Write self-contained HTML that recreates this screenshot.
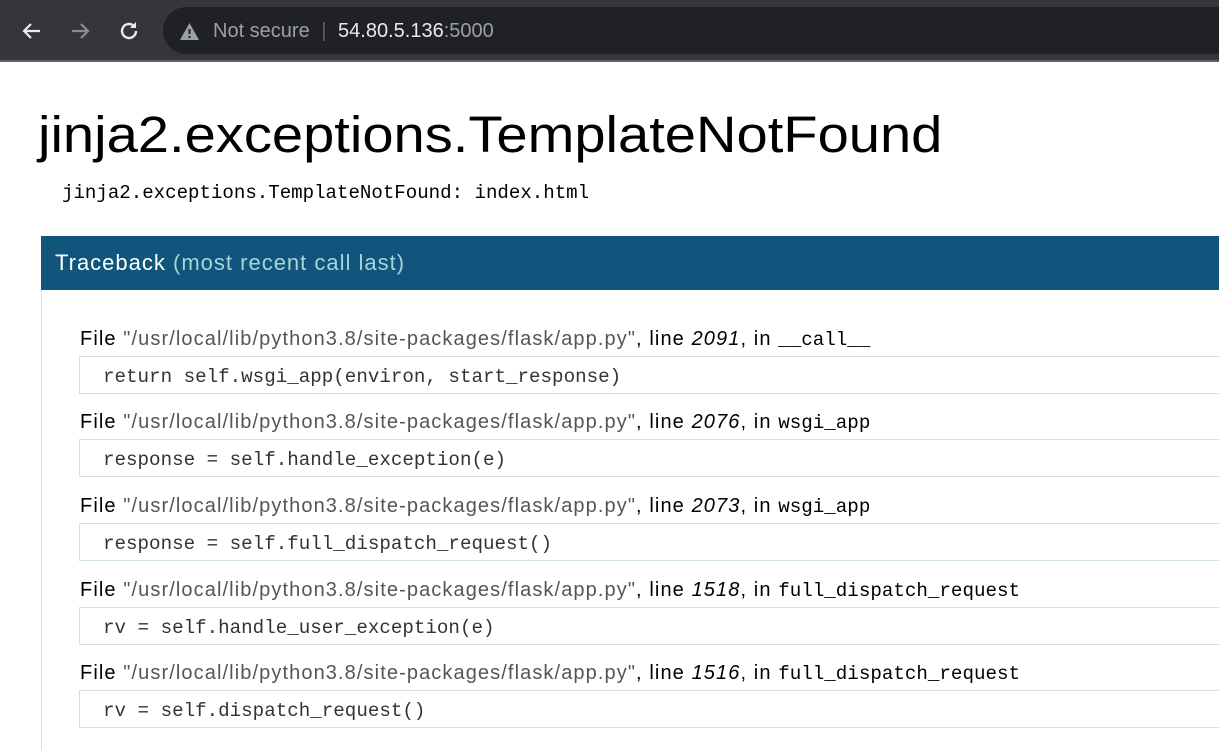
<!DOCTYPE html>
<html><head><meta charset="utf-8"><style>
*{margin:0;padding:0;box-sizing:border-box}
body{width:1219px;height:745px;overflow:hidden;background:#fff;font-family:"Liberation Sans",sans-serif;position:relative}
.bar{position:absolute;left:0;top:0;width:1219px;height:62px;background:#35363a;border-bottom:2px solid #5f6368}
.pill{position:absolute;left:163px;top:7px;width:1080px;height:47px;border-radius:24px;background:#202124}
.url{position:absolute;left:213px;top:20px;font-size:20px;color:#9aa0a6;white-space:nowrap}
.url b{font-weight:normal;color:#e8eaed}
h1{position:absolute;left:38px;top:105px;font-weight:normal;font-size:51px;color:#000;white-space:nowrap;transform:scaleX(1.1);transform-origin:0 0}
.msg{position:absolute;left:62px;top:182px;font-family:"Liberation Mono",monospace;font-size:19.1px;white-space:nowrap}
.tb{position:absolute;left:41px;top:236px;width:1200px;height:54px;background:#11557c;color:#fff;font-size:22px;padding:14px 0 0 14px;letter-spacing:1px;white-space:nowrap}
.tb span{color:#a7d4d9}
.side{position:absolute;left:41px;top:290px;width:1px;height:460px;background:#ddd}
.f{position:absolute;left:80px;font-size:20px;color:#000;white-space:nowrap;letter-spacing:1.1px}
.f .p{color:#555}
.f i{font-style:italic}
.f code{font-family:"Liberation Mono",monospace;font-size:19.2px;letter-spacing:0}
.c{position:absolute;left:79px;width:1160px;height:38px;border:1px solid #d3e3e3;font-family:"Liberation Mono",monospace;font-size:19.2px;color:#333;padding:9px 0 0 23px;white-space:nowrap}
</style></head><body>
<div class="bar">
<svg style="position:absolute;left:20px;top:19px" width="24" height="24" viewBox="0 0 24 24"><path d="M20 12H5M11 5l-7 7 7 7" stroke="#e8eaed" stroke-width="2.2" fill="none"/></svg>
<svg style="position:absolute;left:68px;top:19px" width="24" height="24" viewBox="0 0 24 24"><path d="M4 12h15M13 5l7 7-7 7" stroke="#8a8d91" stroke-width="2.2" fill="none"/></svg>
<svg style="position:absolute;left:117px;top:19px" width="24" height="24" viewBox="0 0 24 24"><path d="M19 12a7 7 0 1 1-2.1-5" stroke="#e8eaed" stroke-width="2.4" fill="none"/><path d="M19 3v6h-6z" fill="#e8eaed"/></svg>
<div class="pill"></div>
<svg style="position:absolute;left:180px;top:23px" width="19" height="17" viewBox="0 0 19 17"><path d="M9.5 0L19 17H0z" fill="#9aa0a6"/><path d="M9.5 6v5M9.5 13v2" stroke="#202124" stroke-width="2"/></svg>
<div class="url">Not secure <span style="color:#5f6368;margin:0 6px">|</span> <b>54.80.5.136</b>:5000</div>
</div>
<h1>jinja2.exceptions.TemplateNotFound</h1>
<div class="msg">jinja2.exceptions.TemplateNotFound: index.html</div>
<div class="tb">Traceback <span>(most recent call last)</span></div>
<div class="side"></div>

<div class="f" style="top:328px">File <span class="p">"/usr/local/lib/python3.8/site-packages/flask/app.py"</span>, line <i>2091</i>, in <code>__call__</code></div>
<div class="c" style="top:356px">return self.wsgi_app(environ, start_response)</div>
<div class="f" style="top:411px">File <span class="p">"/usr/local/lib/python3.8/site-packages/flask/app.py"</span>, line <i>2076</i>, in <code>wsgi_app</code></div>
<div class="c" style="top:439px">response = self.handle_exception(e)</div>
<div class="f" style="top:495px">File <span class="p">"/usr/local/lib/python3.8/site-packages/flask/app.py"</span>, line <i>2073</i>, in <code>wsgi_app</code></div>
<div class="c" style="top:523px">response = self.full_dispatch_request()</div>
<div class="f" style="top:579px">File <span class="p">"/usr/local/lib/python3.8/site-packages/flask/app.py"</span>, line <i>1518</i>, in <code>full_dispatch_request</code></div>
<div class="c" style="top:607px">rv = self.handle_user_exception(e)</div>
<div class="f" style="top:662px">File <span class="p">"/usr/local/lib/python3.8/site-packages/flask/app.py"</span>, line <i>1516</i>, in <code>full_dispatch_request</code></div>
<div class="c" style="top:690px">rv = self.dispatch_request()</div>
</body></html>
